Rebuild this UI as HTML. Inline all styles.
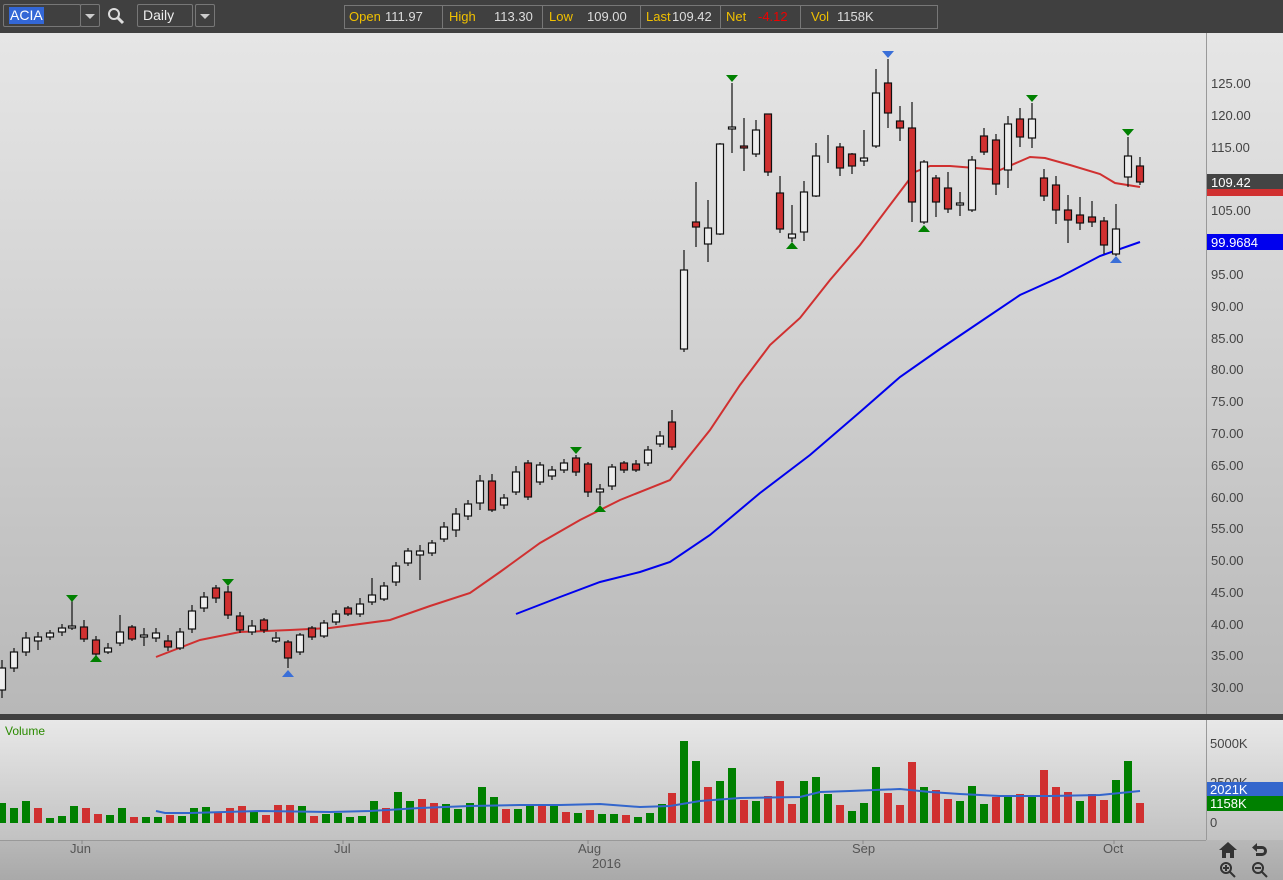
<!DOCTYPE html>
<html><head><meta charset="utf-8"><style>
body{margin:0;width:1283px;height:880px;overflow:hidden;background:#444;font-family:"Liberation Sans",sans-serif}
#top{position:absolute;left:0;top:0;width:1283px;height:33px;background:#404040}
.box{position:absolute;border:1px solid #777;border-radius:2px;height:21px;top:4px;color:#eee;font-size:14px}
.q{position:absolute;top:5px;left:344px;width:592px;height:22px;border:1px solid #777;font-size:13px;line-height:22px}
.c{position:absolute;top:0;height:22px;border-right:1px solid #777}
.q span{position:absolute;white-space:nowrap}
.l{color:#f0c000}
.v{color:#ddd}
svg{position:absolute;left:0;top:0}
</style></head><body>
<div id="top">
 <div class="box" style="left:3px;width:76px"><span style="position:absolute;left:5px;top:2px;background:#3367d6;color:#fff;padding:0 1px;line-height:17px">ACIA</span></div>
 <div class="box" style="left:80px;width:18px"><span style="position:absolute;left:4px;top:9px;border:5px solid transparent;border-top:5px solid #ccc"></span></div>
 <svg style="left:107px;top:7px" width="20" height="20"><circle cx="7" cy="7" r="5" stroke="#ddd" stroke-width="2" fill="none"/><line x1="11" y1="11" x2="16" y2="16" stroke="#ddd" stroke-width="3"/></svg>
 <div class="box" style="left:137px;width:54px"><span style="position:absolute;left:5px;top:2px">Daily</span></div>
 <div class="box" style="left:195px;width:18px"><span style="position:absolute;left:4px;top:9px;border:5px solid transparent;border-top:5px solid #ccc"></span></div>
 <div class="q">
  <div class="c" style="left:0;width:97px"></div>
  <div class="c" style="left:98px;width:99px"></div>
  <div class="c" style="left:198px;width:97px"></div>
  <div class="c" style="left:296px;width:79px"></div>
  <div class="c" style="left:376px;width:79px"></div>
  <span class="l" style="left:4px">Open</span><span class="v" style="left:40px">111.97</span>
  <span class="l" style="left:104px">High</span><span class="v" style="left:149px">113.30</span>
  <span class="l" style="left:204px">Low</span><span class="v" style="left:242px">109.00</span>
  <span class="l" style="left:301px">Last</span><span class="v" style="left:327px">109.42</span>
  <span class="l" style="left:381px">Net</span><span style="left:413px;color:#e00">-4.12</span>
  <span class="l" style="left:466px">Vol</span><span class="v" style="left:492px">1158K</span>
 </div>
</div>
<svg width="1283" height="880" style="top:0">
<defs>
<linearGradient id="g1" x1="0" y1="0" x2="0" y2="1"><stop offset="0" stop-color="#e6e6e6"/><stop offset="1" stop-color="#b8b8b8"/></linearGradient>
<linearGradient id="g2" x1="0" y1="0" x2="0" y2="1"><stop offset="0" stop-color="#e8e8e8"/><stop offset="1" stop-color="#c2c2c2"/></linearGradient>
<linearGradient id="g3" x1="0" y1="0" x2="0" y2="1"><stop offset="0" stop-color="#b8b8b8"/><stop offset="1" stop-color="#a9a9a9"/></linearGradient>
</defs>
<rect x="0" y="33" width="1283" height="681" fill="url(#g1)"/>
<rect x="0" y="714" width="1283" height="6" fill="#404040"/>
<rect x="0" y="720" width="1283" height="120" fill="url(#g2)"/>
<rect x="0" y="840" width="1283" height="40" fill="url(#g3)"/>
<line x1="1206.5" y1="33" x2="1206.5" y2="714" stroke="#999"/>
<line x1="1206.5" y1="720" x2="1206.5" y2="840" stroke="#999"/>
<line x1="0" y1="840.5" x2="1206" y2="840.5" stroke="#999"/>
<g font-size="13" fill="#444" font-family="Liberation Sans,sans-serif">
<text x="1211" y="88">125.00</text><text x="1211" y="120">120.00</text><text x="1211" y="152">115.00</text>
<text x="1211" y="215">105.00</text><text x="1211" y="279">95.00</text>
<text x="1211" y="311">90.00</text><text x="1211" y="343">85.00</text><text x="1211" y="374">80.00</text><text x="1211" y="406">75.00</text>
<text x="1211" y="438">70.00</text><text x="1211" y="470">65.00</text><text x="1211" y="502">60.00</text><text x="1211" y="533">55.00</text>
<text x="1211" y="565">50.00</text><text x="1211" y="597">45.00</text><text x="1211" y="629">40.00</text><text x="1211" y="660">35.00</text><text x="1211" y="692">30.00</text>
<text x="1210" y="748">5000K</text><text x="1210" y="787">2500K</text><text x="1210" y="827">0</text>
<text x="70" y="853" fill="#555">Jun</text><text x="334" y="853" fill="#555">Jul</text><text x="578" y="853" fill="#555">Aug</text>
<text x="852" y="853" fill="#555">Sep</text><text x="1103" y="853" fill="#555">Oct</text><text x="592" y="868" fill="#555">2016</text>
</g>
<rect x="1207" y="187" width="76" height="9" fill="#d03030"/>
<rect x="1207" y="174" width="76" height="15" fill="#444"/>
<text x="1211" y="187" font-size="13" fill="#fff">109.42</text>
<rect x="1207" y="234" width="76" height="16" fill="#0000ee"/>
<text x="1211" y="247" font-size="13" fill="#fff">99.9684</text>
<rect x="1207" y="782" width="76" height="14" fill="#3366cc"/>
<text x="1210" y="794" font-size="13" fill="#fff">2021K</text>
<rect x="1207" y="796" width="76" height="15" fill="#008000"/>
<text x="1210" y="808" font-size="13" fill="#fff">1158K</text>
<text x="5" y="735" font-size="12" fill="#2a8a00">Volume</text>
<polyline fill="none" stroke="#d03030" stroke-width="2" points="156,657 200,640 240,632 290,630 330,628 390,620 430,606 470,593 500,572 540,543 580,520 620,500 670,480 710,430 740,385 770,345 800,318 830,280 860,245 890,205 915,172 930,166 950,166 975,168 1000,170 1030,157 1045,158 1070,165 1100,174 1115,183 1140,187"/>
<polyline fill="none" stroke="#0000ee" stroke-width="2" points="516,614 560,597 600,582 640,572 670,562 710,535 760,493 810,455 860,412 900,377 940,349 980,322 1020,295 1060,277 1100,256 1140,242"/>
<g stroke="#111" stroke-width="1.2">
<line x1="2" y1="660" x2="2" y2="698"/><rect x="-1.5" y="668" width="7" height="22" fill="#eee"/>
<line x1="14" y1="648" x2="14" y2="672"/><rect x="10.5" y="652" width="7" height="16" fill="#eee"/>
<line x1="26" y1="632" x2="26" y2="656"/><rect x="22.5" y="638" width="7" height="14" fill="#eee"/>
<line x1="38" y1="632" x2="38" y2="650"/><rect x="34.5" y="637" width="7" height="4" fill="#eee"/>
<line x1="50" y1="630" x2="50" y2="640"/><rect x="46.5" y="633" width="7" height="4" fill="#eee"/>
<line x1="62" y1="624" x2="62" y2="636"/><rect x="58.5" y="628" width="7" height="4" fill="#eee"/>
<line x1="72" y1="600" x2="72" y2="630"/><rect x="68.5" y="626" width="7" height="2" fill="#eee"/>
<line x1="84" y1="620" x2="84" y2="642"/><rect x="80.5" y="627" width="7" height="12" fill="#d03030"/>
<line x1="96" y1="636" x2="96" y2="658"/><rect x="92.5" y="640" width="7" height="14" fill="#d03030"/>
<line x1="108" y1="643" x2="108" y2="654"/><rect x="104.5" y="648" width="7" height="4" fill="#eee"/>
<line x1="120" y1="615" x2="120" y2="646"/><rect x="116.5" y="632" width="7" height="11" fill="#eee"/>
<line x1="132" y1="625" x2="132" y2="641"/><rect x="128.5" y="627" width="7" height="12" fill="#d03030"/>
<line x1="144" y1="628" x2="144" y2="646"/><rect x="140.5" y="635" width="7" height="2" fill="#eee"/>
<line x1="156" y1="628" x2="156" y2="642"/><rect x="152.5" y="633" width="7" height="5" fill="#eee"/>
<line x1="168" y1="635" x2="168" y2="651"/><rect x="164.5" y="641" width="7" height="6" fill="#d03030"/>
<line x1="180" y1="628" x2="180" y2="650"/><rect x="176.5" y="632" width="7" height="16" fill="#eee"/>
<line x1="192" y1="605" x2="192" y2="633"/><rect x="188.5" y="611" width="7" height="18" fill="#eee"/>
<line x1="204" y1="592" x2="204" y2="612"/><rect x="200.5" y="597" width="7" height="11" fill="#eee"/>
<line x1="216" y1="585" x2="216" y2="603"/><rect x="212.5" y="588" width="7" height="10" fill="#d03030"/>
<line x1="228" y1="586" x2="228" y2="619"/><rect x="224.5" y="592" width="7" height="23" fill="#d03030"/>
<line x1="240" y1="612" x2="240" y2="633"/><rect x="236.5" y="616" width="7" height="14" fill="#d03030"/>
<line x1="252" y1="620" x2="252" y2="635"/><rect x="248.5" y="626" width="7" height="6" fill="#eee"/>
<line x1="264" y1="618" x2="264" y2="633"/><rect x="260.5" y="620" width="7" height="10" fill="#d03030"/>
<line x1="276" y1="632" x2="276" y2="643"/><rect x="272.5" y="638" width="7" height="3" fill="#eee"/>
<line x1="288" y1="640" x2="288" y2="668"/><rect x="284.5" y="642" width="7" height="16" fill="#d03030"/>
<line x1="300" y1="633" x2="300" y2="655"/><rect x="296.5" y="635" width="7" height="17" fill="#eee"/>
<line x1="312" y1="626" x2="312" y2="640"/><rect x="308.5" y="628" width="7" height="9" fill="#d03030"/>
<line x1="324" y1="620" x2="324" y2="638"/><rect x="320.5" y="623" width="7" height="13" fill="#eee"/>
<line x1="336" y1="610" x2="336" y2="625"/><rect x="332.5" y="614" width="7" height="8" fill="#eee"/>
<line x1="348" y1="606" x2="348" y2="616"/><rect x="344.5" y="608" width="7" height="6" fill="#d03030"/>
<line x1="360" y1="598" x2="360" y2="617"/><rect x="356.5" y="604" width="7" height="10" fill="#eee"/>
<line x1="372" y1="578" x2="372" y2="605"/><rect x="368.5" y="595" width="7" height="7" fill="#eee"/>
<line x1="384" y1="582" x2="384" y2="601"/><rect x="380.5" y="586" width="7" height="13" fill="#eee"/>
<line x1="396" y1="562" x2="396" y2="586"/><rect x="392.5" y="566" width="7" height="16" fill="#eee"/>
<line x1="408" y1="548" x2="408" y2="566"/><rect x="404.5" y="551" width="7" height="12" fill="#eee"/>
<line x1="420" y1="545" x2="420" y2="580"/><rect x="416.5" y="551" width="7" height="4" fill="#eee"/>
<line x1="432" y1="540" x2="432" y2="556"/><rect x="428.5" y="543" width="7" height="10" fill="#eee"/>
<line x1="444" y1="522" x2="444" y2="542"/><rect x="440.5" y="527" width="7" height="12" fill="#eee"/>
<line x1="456" y1="508" x2="456" y2="537"/><rect x="452.5" y="514" width="7" height="16" fill="#eee"/>
<line x1="468" y1="500" x2="468" y2="520"/><rect x="464.5" y="504" width="7" height="12" fill="#eee"/>
<line x1="480" y1="475" x2="480" y2="510"/><rect x="476.5" y="481" width="7" height="22" fill="#eee"/>
<line x1="492" y1="474" x2="492" y2="512"/><rect x="488.5" y="481" width="7" height="29" fill="#d03030"/>
<line x1="504" y1="494" x2="504" y2="509"/><rect x="500.5" y="498" width="7" height="7" fill="#eee"/>
<line x1="516" y1="466" x2="516" y2="495"/><rect x="512.5" y="472" width="7" height="20" fill="#eee"/>
<line x1="528" y1="460" x2="528" y2="500"/><rect x="524.5" y="463" width="7" height="34" fill="#d03030"/>
<line x1="540" y1="462" x2="540" y2="485"/><rect x="536.5" y="465" width="7" height="17" fill="#eee"/>
<line x1="552" y1="466" x2="552" y2="480"/><rect x="548.5" y="470" width="7" height="6" fill="#eee"/>
<line x1="564" y1="459" x2="564" y2="473"/><rect x="560.5" y="463" width="7" height="7" fill="#eee"/>
<line x1="576" y1="455" x2="576" y2="476"/><rect x="572.5" y="458" width="7" height="14" fill="#d03030"/>
<line x1="588" y1="462" x2="588" y2="497"/><rect x="584.5" y="464" width="7" height="28" fill="#d03030"/>
<line x1="600" y1="484" x2="600" y2="505"/><rect x="596.5" y="489" width="7" height="3" fill="#eee"/>
<line x1="612" y1="464" x2="612" y2="490"/><rect x="608.5" y="467" width="7" height="19" fill="#eee"/>
<line x1="624" y1="461" x2="624" y2="473"/><rect x="620.5" y="463" width="7" height="7" fill="#d03030"/>
<line x1="636" y1="460" x2="636" y2="472"/><rect x="632.5" y="464" width="7" height="6" fill="#d03030"/>
<line x1="648" y1="446" x2="648" y2="466"/><rect x="644.5" y="450" width="7" height="13" fill="#eee"/>
<line x1="660" y1="431" x2="660" y2="447"/><rect x="656.5" y="436" width="7" height="8" fill="#eee"/>
<line x1="672" y1="410" x2="672" y2="450"/><rect x="668.5" y="422" width="7" height="25" fill="#d03030"/>
<line x1="684" y1="250" x2="684" y2="352"/><rect x="680.5" y="270" width="7" height="79" fill="#eee"/>
<line x1="696" y1="182" x2="696" y2="247"/><rect x="692.5" y="222" width="7" height="5" fill="#d03030"/>
<line x1="708" y1="200" x2="708" y2="262"/><rect x="704.5" y="228" width="7" height="16" fill="#eee"/>
<line x1="720" y1="143" x2="720" y2="235"/><rect x="716.5" y="144" width="7" height="90" fill="#eee"/>
<line x1="732" y1="83" x2="732" y2="153"/><rect x="728.5" y="127" width="7" height="2" fill="#eee"/>
<line x1="744" y1="118" x2="744" y2="171"/><rect x="740.5" y="146" width="7" height="2" fill="#d03030"/>
<line x1="756" y1="120" x2="756" y2="157"/><rect x="752.5" y="130" width="7" height="24" fill="#eee"/>
<line x1="768" y1="114" x2="768" y2="176"/><rect x="764.5" y="114" width="7" height="58" fill="#d03030"/>
<line x1="780" y1="176" x2="780" y2="233"/><rect x="776.5" y="193" width="7" height="36" fill="#d03030"/>
<line x1="792" y1="205" x2="792" y2="242"/><rect x="788.5" y="234" width="7" height="4" fill="#eee"/>
<line x1="804" y1="181" x2="804" y2="241"/><rect x="800.5" y="192" width="7" height="40" fill="#eee"/>
<line x1="816" y1="143" x2="816" y2="197"/><rect x="812.5" y="156" width="7" height="40" fill="#eee"/>
<line x1="828" y1="135" x2="828" y2="163"/>
<line x1="840" y1="143" x2="840" y2="176"/><rect x="836.5" y="147" width="7" height="21" fill="#d03030"/>
<line x1="852" y1="153" x2="852" y2="174"/><rect x="848.5" y="154" width="7" height="12" fill="#d03030"/>
<line x1="864" y1="130" x2="864" y2="166"/><rect x="860.5" y="158" width="7" height="3" fill="#eee"/>
<line x1="876" y1="69" x2="876" y2="148"/><rect x="872.5" y="93" width="7" height="53" fill="#eee"/>
<line x1="888" y1="59" x2="888" y2="128"/><rect x="884.5" y="83" width="7" height="30" fill="#d03030"/>
<line x1="900" y1="106" x2="900" y2="141"/><rect x="896.5" y="121" width="7" height="7" fill="#d03030"/>
<line x1="912" y1="102" x2="912" y2="222"/><rect x="908.5" y="128" width="7" height="74" fill="#d03030"/>
<line x1="924" y1="160" x2="924" y2="224"/><rect x="920.5" y="162" width="7" height="60" fill="#eee"/>
<line x1="936" y1="175" x2="936" y2="217"/><rect x="932.5" y="178" width="7" height="24" fill="#d03030"/>
<line x1="948" y1="172" x2="948" y2="213"/><rect x="944.5" y="188" width="7" height="21" fill="#d03030"/>
<line x1="960" y1="192" x2="960" y2="216"/><rect x="956.5" y="203" width="7" height="2" fill="#eee"/>
<line x1="972" y1="156" x2="972" y2="212"/><rect x="968.5" y="160" width="7" height="50" fill="#eee"/>
<line x1="984" y1="128" x2="984" y2="155"/><rect x="980.5" y="136" width="7" height="16" fill="#d03030"/>
<line x1="996" y1="134" x2="996" y2="195"/><rect x="992.5" y="140" width="7" height="44" fill="#d03030"/>
<line x1="1008" y1="116" x2="1008" y2="188"/><rect x="1004.5" y="124" width="7" height="46" fill="#eee"/>
<line x1="1020" y1="108" x2="1020" y2="147"/><rect x="1016.5" y="119" width="7" height="18" fill="#d03030"/>
<line x1="1032" y1="103" x2="1032" y2="148"/><rect x="1028.5" y="119" width="7" height="19" fill="#eee"/>
<line x1="1044" y1="169" x2="1044" y2="201"/><rect x="1040.5" y="178" width="7" height="18" fill="#d03030"/>
<line x1="1056" y1="176" x2="1056" y2="224"/><rect x="1052.5" y="185" width="7" height="25" fill="#d03030"/>
<line x1="1068" y1="195" x2="1068" y2="243"/><rect x="1064.5" y="210" width="7" height="10" fill="#d03030"/>
<line x1="1080" y1="197" x2="1080" y2="230"/><rect x="1076.5" y="215" width="7" height="8" fill="#d03030"/>
<line x1="1092" y1="201" x2="1092" y2="227"/><rect x="1088.5" y="217" width="7" height="5" fill="#d03030"/>
<line x1="1104" y1="217" x2="1104" y2="254"/><rect x="1100.5" y="221" width="7" height="24" fill="#d03030"/>
<line x1="1116" y1="204" x2="1116" y2="256"/><rect x="1112.5" y="229" width="7" height="25" fill="#eee"/>
<line x1="1128" y1="137" x2="1128" y2="187"/><rect x="1124.5" y="156" width="7" height="21" fill="#eee"/>
<line x1="1140" y1="157" x2="1140" y2="185"/><rect x="1136.5" y="166" width="7" height="16" fill="#d03030"/>
</g>
<g fill="#008000">
<path d="M66 595h12l-6 7z"/><path d="M222 579h12l-6 7z"/><path d="M570 447h12l-6 7z"/><path d="M726 75h12l-6 7z"/><path d="M1026 95h12l-6 7z"/><path d="M1122 129h12l-6 7z"/>
<path d="M90 662h12l-6-7z"/><path d="M594 512h12l-6-7z"/><path d="M786 249h12l-6-7z"/><path d="M918 232h12l-6-7z"/>
</g>
<g fill="#3a6fd8">
<path d="M882 51h12l-6 7z"/><path d="M282 677h12l-6-7z"/><path d="M1110 263h12l-6-7z"/>
</g>
<g>
<g fill="#008000"><rect x="-2" y="803" width="8" height="20"/><rect x="10" y="808" width="8" height="15"/><rect x="22" y="801" width="8" height="22"/><rect x="46" y="818" width="8" height="5"/><rect x="58" y="816" width="8" height="7"/><rect x="70" y="806" width="8" height="17"/><rect x="106" y="815" width="8" height="8"/><rect x="118" y="808" width="8" height="15"/><rect x="142" y="817" width="8" height="6"/><rect x="154" y="817" width="8" height="6"/><rect x="178" y="816" width="8" height="7"/><rect x="190" y="808" width="8" height="15"/><rect x="202" y="807" width="8" height="16"/><rect x="250" y="812" width="8" height="11"/><rect x="298" y="806" width="8" height="17"/><rect x="322" y="814" width="8" height="9"/><rect x="334" y="813" width="8" height="10"/><rect x="346" y="817" width="8" height="6"/><rect x="358" y="816" width="8" height="7"/><rect x="370" y="801" width="8" height="22"/><rect x="394" y="792" width="8" height="31"/><rect x="406" y="801" width="8" height="22"/><rect x="442" y="804" width="8" height="19"/><rect x="454" y="809" width="8" height="14"/><rect x="466" y="803" width="8" height="20"/><rect x="478" y="787" width="8" height="36"/><rect x="490" y="797" width="8" height="26"/><rect x="514" y="809" width="8" height="14"/><rect x="526" y="806" width="8" height="17"/><rect x="550" y="806" width="8" height="17"/><rect x="574" y="813" width="8" height="10"/>
<rect x="598" y="814" width="8" height="9"/><rect x="610" y="814" width="8" height="9"/><rect x="634" y="817" width="8" height="6"/><rect x="646" y="813" width="8" height="10"/><rect x="658" y="804" width="8" height="19"/><rect x="680" y="741" width="8" height="82"/><rect x="692" y="761" width="8" height="62"/><rect x="716" y="781" width="8" height="42"/><rect x="728" y="768" width="8" height="55"/><rect x="752" y="801" width="8" height="22"/><rect x="800" y="781" width="8" height="42"/><rect x="812" y="777" width="8" height="46"/><rect x="824" y="794" width="8" height="29"/><rect x="848" y="811" width="8" height="12"/><rect x="860" y="803" width="8" height="20"/><rect x="872" y="767" width="8" height="56"/><rect x="920" y="787" width="8" height="36"/><rect x="956" y="801" width="8" height="22"/><rect x="968" y="786" width="8" height="37"/><rect x="980" y="804" width="8" height="19"/><rect x="1004" y="795" width="8" height="28"/><rect x="1028" y="796" width="8" height="27"/><rect x="1076" y="801" width="8" height="22"/><rect x="1112" y="780" width="8" height="43"/><rect x="1124" y="761" width="8" height="62"/></g>
<g fill="#d03030"><rect x="34" y="808" width="8" height="15"/><rect x="82" y="808" width="8" height="15"/><rect x="94" y="814" width="8" height="9"/><rect x="130" y="817" width="8" height="6"/><rect x="166" y="815" width="8" height="8"/><rect x="214" y="812" width="8" height="11"/><rect x="226" y="808" width="8" height="15"/><rect x="238" y="806" width="8" height="17"/><rect x="262" y="815" width="8" height="8"/><rect x="274" y="805" width="8" height="18"/><rect x="286" y="805" width="8" height="18"/><rect x="310" y="816" width="8" height="7"/><rect x="382" y="808" width="8" height="15"/><rect x="418" y="799" width="8" height="24"/><rect x="430" y="803" width="8" height="20"/><rect x="502" y="809" width="8" height="14"/><rect x="538" y="806" width="8" height="17"/><rect x="562" y="812" width="8" height="11"/>
<rect x="586" y="810" width="8" height="13"/><rect x="622" y="815" width="8" height="8"/><rect x="668" y="793" width="8" height="30"/><rect x="704" y="787" width="8" height="36"/><rect x="740" y="800" width="8" height="23"/><rect x="764" y="796" width="8" height="27"/><rect x="776" y="781" width="8" height="42"/><rect x="788" y="804" width="8" height="19"/><rect x="836" y="805" width="8" height="18"/><rect x="884" y="793" width="8" height="30"/><rect x="896" y="805" width="8" height="18"/><rect x="908" y="762" width="8" height="61"/><rect x="932" y="790" width="8" height="33"/><rect x="944" y="799" width="8" height="24"/><rect x="992" y="797" width="8" height="26"/><rect x="1016" y="794" width="8" height="29"/><rect x="1040" y="770" width="8" height="53"/><rect x="1052" y="787" width="8" height="36"/><rect x="1064" y="792" width="8" height="31"/><rect x="1088" y="794" width="8" height="29"/><rect x="1100" y="800" width="8" height="23"/><rect x="1136" y="803" width="8" height="20"/></g>
<polyline fill="none" stroke="#3366cc" stroke-width="2" points="156,811 165,813 190,813 260,811 330,812 370,811 420,808 470,806 520,805 560,805 600,804 640,807 670,806 700,801 740,798 800,797 820,792 850,791 900,789 930,792 960,794 1000,796 1050,796 1100,795 1140,791"/>
</g>
<g stroke="#888"><line x1="82" y1="840" x2="82" y2="844"/><line x1="343" y1="840" x2="343" y2="844"/><line x1="588" y1="840" x2="588" y2="844"/><line x1="863" y1="840" x2="863" y2="844"/><line x1="1114" y1="840" x2="1114" y2="844"/></g>
<g fill="#333">
<path d="M1228 842l-9 8h3v8h4v-5h4v5h4v-8h3z"/>
<path d="M1257 846h5a5 5 0 0 1 0 10h-6v-3h6a2 2 0 0 0 0-4h-5v3l-5-4.5 5-4.5z"/>
</g>
<g fill="none" stroke="#333" stroke-width="2"><circle cx="1226" cy="868" r="5"/><line x1="1230" y1="872" x2="1235" y2="877"/><line x1="1223" y1="868" x2="1229" y2="868"/><line x1="1226" y1="865" x2="1226" y2="871"/>
<circle cx="1258" cy="868" r="5"/><line x1="1262" y1="872" x2="1267" y2="877"/><line x1="1255" y1="868" x2="1261" y2="868"/></g>
</svg>
</body></html>
